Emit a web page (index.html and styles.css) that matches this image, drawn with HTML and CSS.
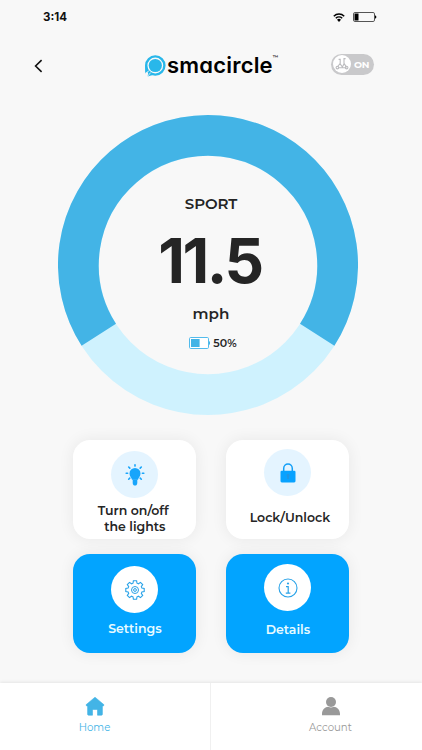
FILE: index.html
```html
<!DOCTYPE html>
<html lang="en">
<head>
<meta charset="utf-8">
<title>smacircle</title>
<link rel="stylesheet" href="styles.css">
</head>
<body>

<div class="app">
  <div class="status-bar">
    <span class="time">3:14</span>
    <svg class="wifi" width="12" height="9" viewBox="0 0 12 9">
      <path d="M.8 3.2a7.4 7.4 0 0 1 10.4 0M2.8 5.3a4.7 4.7 0 0 1 6.4 0" fill="none" stroke="#000" stroke-width="1.5"/>
      <path d="M4 6.8a2.8 2.8 0 0 1 4 0L6 8.9z"/>
    </svg>
    <svg class="battery" width="24" height="10" viewBox="0 0 24 10">
      <rect x=".5" y=".5" width="21" height="9" rx="1.4" fill="none" stroke="#555"/>
      <rect x="1.5" y="1.5" width="4" height="7"/>
      <path d="M22 3.2q1.4.5 1.4 1.8T22 6.8z"/>
    </svg>
  </div>

  <header class="header">
    <svg class="back" width="9" height="14" viewBox="0 0 9 14">
      <path d="M7.6 1.2 1.6 7l6 5.8" fill="none" stroke="#111" stroke-width="1.6"/>
    </svg>
    <div class="logo">
      <svg width="22" height="22" viewBox="0 0 22 22">
        <circle cx="11.3" cy="10.5" r="9.1" fill="none" stroke="#29b7ea" stroke-width="2.4"/>
        <circle cx="11.3" cy="10.5" r="6.6" fill="#29b7ea"/>
        <path d="M1.1 10v8.6l3.8-2.4zM4.4 16.4 3.6 21.4l6-1.6z" fill="#29b7ea"/>
        <path d="M.8 18.6 5 15.8M3.4 21.6l3.2-4" stroke="#f8f8f8" stroke-width=".8"/>
      </svg>
      <span class="logo-text">smacircle</span>
      <span class="logo-tm">™</span>
    </div>
    <div class="toggle">
      <svg width="18" height="18" viewBox="0 0 18 18">
        <circle cx="9" cy="9" r="9" fill="#fff"/>
        <g fill="none" stroke="#bcbcbf" stroke-width="1.1">
          <circle cx="4.4" cy="12.6" r="1.3"/>
          <circle cx="13.6" cy="12.6" r="1.3"/>
          <path d="M5.6 4.4h1.6v4L4.4 12M12.6 3.6H11v4.8l2.6 4M7 8.6l2.4 3.4L11.2 8.6M6 12.8h6"/>
        </g>
      </svg>
      <span>ON</span>
    </div>
  </header>

  <main class="main">
    <div class="gauge">
      <svg class="ring" width="300" height="300" viewBox="0 0 300 300">
        <circle cx="150" cy="150" r="129.6" fill="none" stroke="#cff2fe" stroke-width="40.8"/>
        <path d="M40.8 219.8A129.6 129.6 0 1 1 259.2 219.8" fill="none" stroke="#43b4e6" stroke-width="40.8"/>
      </svg>
      <div class="reading">
        <div class="mode">SPORT</div>
        <div class="speed">11.5</div>
        <div class="unit">mph</div>
        <div class="charge">
          <svg width="21" height="12" viewBox="0 0 21 12">
            <rect x=".5" y=".5" width="19" height="11" rx="1.2" fill="#fff" stroke="#52bbec"/>
            <rect x="2" y="2" width="8.6" height="8" fill="#43b4e6"/>
            <path d="M20 4q1.2.5 1.2 2T20 8z" fill="#43b4e6"/>
          </svg>
          <span>50%</span>
        </div>
      </div>
    </div>

    <div class="cards">
      <div class="card lights">
        <div class="icon">
          <svg width="20" height="24" viewBox="0 0 20 24">
            <path d="M10 5a5.5 5.5 0 0 0-5.5 5.5c0 2.5 1.8 3.8 2.5 6.2h6c.7-2.4 2.5-3.7 2.5-6.2A5.5 5.5 0 0 0 10 5z"/>
            <path d="M7.7 16.4h4.6v3.4q0 2.8-2.3 2.8t-2.3-2.8z"/>
            <path d="M10 1.7v1.4M1.2 10.2h1.4M17.4 10.2h1.4M3.7 4l1.1 1.1M16.3 4l-1.1 1.1M3.7 16.2l1.1-1.1M16.3 16.2l-1.1-1.1" stroke="#18a5fb" stroke-width="1.6" stroke-linecap="round"/>
          </svg>
        </div>
        <div class="label">Turn on/off&nbsp;<br>the lights</div>
      </div>
      <div class="card lock">
        <div class="icon">
          <svg width="16" height="20" viewBox="0 0 16 20">
            <path d="M3.7 9V5.4a4.3 4.3 0 0 1 8.6 0V9" fill="none" stroke="#139ff7" stroke-width="1.5"/>
            <rect x=".5" y="7.8" width="15" height="11.6" rx="1.3" fill="#08a2ff"/>
            <path d="M8 11a1.5 1.5 0 0 1 .8 2.7V16H7.2v-2.3A1.5 1.5 0 0 1 8 11z" fill="#2494df"/>
          </svg>
        </div>
        <div class="label">Lock/Unlock</div>
      </div>
      <div class="card blue settings">
        <div class="icon">
          <svg width="20" height="20" viewBox="0 0 20 20" fill="none" stroke="#2aa3e8">
            <path d="M8.4.8h3.2l.4 2.4 1.5.6 2-1.4 2.2 2.2-1.4 2 .6 1.5 2.3.4v3l-2.3.4-.6 1.5 1.4 2-2.2 2.2-2-1.4-1.5.6-.4 2.4H8.4L8 16.8l-1.5-.6-2 1.4-2.2-2.2 1.4-2-.6-1.5-2.3-.4v-3l2.3-.4.6-1.5-1.4-2 2.2-2.2 2 1.4L8 3.2z" stroke-width="1.1"/>
            <circle cx="10" cy="10" r="3.5"/>
            <circle cx="10" cy="10" r="1.4"/>
          </svg>
        </div>
        <div class="label">Settings</div>
      </div>
      <div class="card blue details">
        <div class="icon">
          <svg width="20" height="20" viewBox="0 0 20 20">
            <circle cx="10" cy="10" r="9" fill="none" stroke="#2aa3e8" stroke-width="1.1"/>
            <circle cx="10" cy="5.5" r="1.1" fill="#2aa3e8"/>
            <path d="M8 8.6h2.2v6.3M7.8 15.1h4.6" fill="none" stroke="#2aa3e8" stroke-width="1.2"/>
          </svg>
        </div>
        <div class="label">Details</div>
      </div>
    </div>
  </main>

  <nav class="tabs">
    <div class="tab home">
      <svg width="20" height="20" viewBox="0 0 20 20">
        <path d="M10 1.2 19 8.8l-.6 1.2h-1v8.2q0 1-1 1h-3.9v-4.7q0-1-1-1h-3q-1 0-1 1v4.7H3.6q-1 0-1-1V10h-1L1 8.8z" fill="#43b4e6" stroke="#43b4e6" stroke-width=".6" stroke-linejoin="round"/>
      </svg>
      <span>Home</span>
    </div>
    <div class="tab account">
      <svg width="20" height="20" viewBox="0 0 20 20">
        <circle cx="10" cy="6" r="5" fill="#999"/>
        <path d="M1 19.2v-1.4c0-4 3.2-7 6.3-7.1q2.7 1.6 5.4 0c3.1.1 6.3 3.1 6.3 7.1v1.4z" fill="#999"/>
      </svg>
      <span>Account</span>
    </div>
  </nav>
</div>

</body>
</html>
```

FILE: styles.css
```css
* {
  box-sizing: border-box;
}

body {
  margin: 0;
  background: #f8f8f8;
  color: #252525;
  font-family: Montserrat, Inter, "Liberation Sans", sans-serif;
}

svg {
  display: block;
  flex: none;
}

.app {
  width: 422px;
  height: 750px;
  display: flex;
  flex-direction: column;
  overflow: hidden;
}

.status-bar {
  height: 34px;
  padding: 0 45px 0 43px;
  display: flex;
  align-items: center;
}

.time {
  margin-right: auto;
  font-family: Inter, sans-serif;
  font-size: 11.5px;
  font-weight: 700;
  line-height: 34px;
  color: #111;
}

.battery {
  margin-left: 8px;
}

.header {
  height: 64px;
  padding: 0 48px 0 34px;
  display: flex;
  align-items: center;
}

.back {
  margin-right: 101px;
}

.logo {
  margin-right: auto;
  display: flex;
  align-items: center;
}

.logo-text {
  margin: 0 0 3px 1px;
  font-family: Inter, sans-serif;
  font-size: 22px;
  font-weight: 600;
  line-height: 24px;
  letter-spacing: 0.2px;
  font-feature-settings: "cv11";
  color: #000;
}

.logo-tm {
  align-self: flex-start;
  font-size: 5.5px;
  font-weight: 600;
  line-height: 8px;
}

.toggle {
  width: 43px;
  height: 21px;
  margin-bottom: 4px;
  padding-left: 2px;
  border-radius: 11px;
  background: #c9c9cb;
  color: #fff;
  display: flex;
  align-items: center;
  gap: 3px;
  font-size: 9.5px;
  font-weight: 700;
  letter-spacing: -0.2px;
}

.main {
  height: 585px;
  padding-top: 17px;
}

.gauge {
  width: 300px;
  height: 300px;
  margin-left: 58px;
  display: grid;
}

.ring,
.reading {
  grid-area: 1 / 1;
}

.reading {
  padding: 79px 0 0 6px;
  text-align: center;
}

.mode {
  font-size: 15px;
  font-weight: 600;
  line-height: 20px;
  letter-spacing: -0.1px;
}

.speed {
  margin-top: 17px;
  font-family: Inter, sans-serif;
  font-size: 62px;
  font-weight: 700;
  line-height: 60px;
  letter-spacing: -2.5px;
  text-indent: -2px;
}

.unit {
  margin-top: 13px;
  font-size: 15.2px;
  font-weight: 600;
  line-height: 20px;
}

.charge {
  margin-top: 11px;
  padding-left: 4px;
  display: flex;
  justify-content: center;
  align-items: center;
  gap: 3px;
  font-size: 11px;
  font-weight: 600;
  line-height: 16px;
}

.cards {
  margin: 25px 0 0 73.4px;
  display: grid;
  grid-template-columns: 123px 123px;
  grid-auto-rows: 99px;
  gap: 15px 30px;
}

.card {
  border-radius: 17px;
  background: #fff;
  box-shadow: 0 0 16px rgba(0, 0, 0, 0.07);
  display: flex;
  flex-direction: column;
  align-items: center;
  padding-top: 11px;
}

.icon {
  width: 47px;
  height: 47px;
  border-radius: 50%;
  background: #e4f4ff;
  fill: #18a5fb;
  display: flex;
  flex: none;
  align-items: center;
  justify-content: center;
}

.label {
  margin-top: 5px;
  font-size: 12.5px;
  font-weight: 600;
  line-height: 16px;
  text-align: center;
}

.lock,
.details {
  padding-top: 9px;
}

.lock .label {
  margin-top: 14px;
  padding-left: 4px;
}

.blue {
  background: #02a4ff;
  color: #e8fbff;
}

.blue .icon {
  background: #fff;
}

.settings {
  padding-top: 12px;
}

.settings .label {
  margin-top: 8px;
}

.details {
  padding-top: 10px;
}

.details .label {
  margin-top: 11px;
}

.tabs {
  height: 67px;
  display: flex;
  background: #fff;
  box-shadow: 0 -1px 3px rgba(0, 0, 0, 0.08);
}

.tab {
  width: 211px;
  padding-top: 13px;
  display: flex;
  flex-direction: column;
  align-items: center;
  gap: 4px;
  font-size: 10.2px;
  line-height: 16px;
  color: #999;
}

.home {
  padding-right: 21px;
  border-right: 1px solid #f0f0f0;
  color: #43b4e6;
}

.account {
  padding-left: 28px;
}
```
